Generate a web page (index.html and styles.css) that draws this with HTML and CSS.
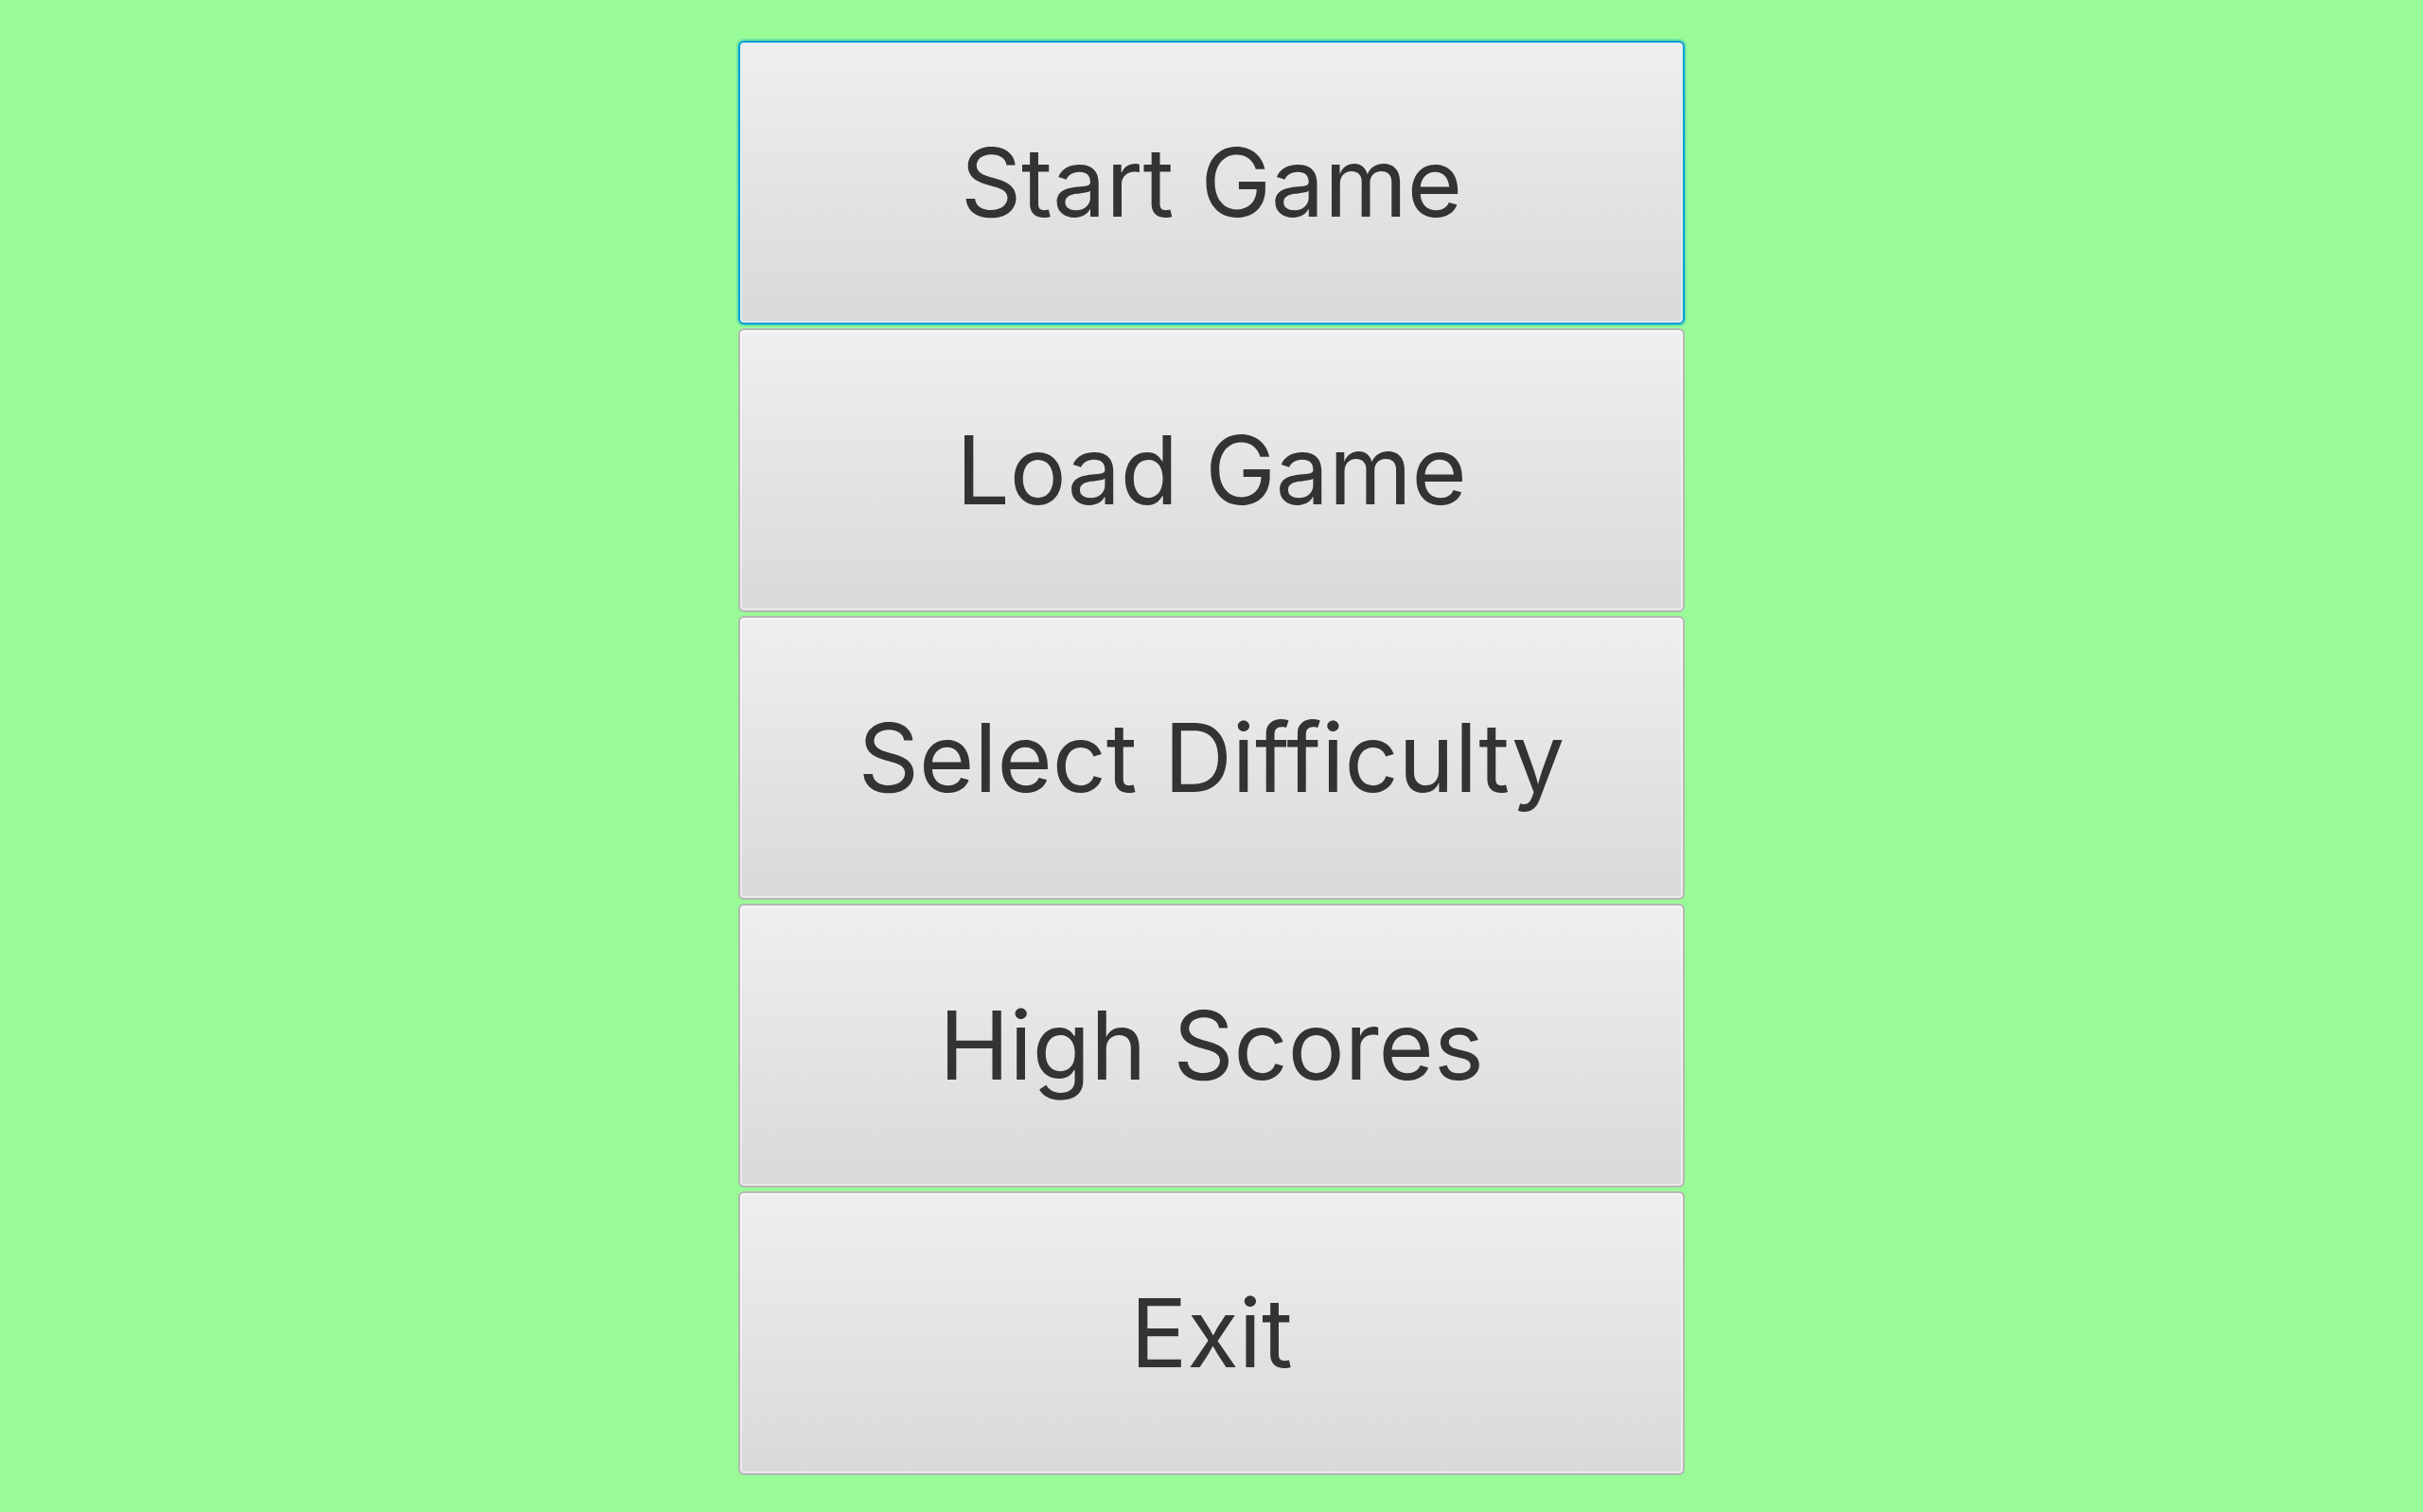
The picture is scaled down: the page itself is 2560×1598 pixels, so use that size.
FILE: index.html
```html
<!DOCTYPE html>
<html>
<head>
<meta charset="utf-8">
<link rel="stylesheet" href="styles.css">
</head>
<body>
<div class="menu">
  <button class="btn focused">Start Game</button>
  <button class="btn">Load Game</button>
  <button class="btn">Select Difficulty</button>
  <button class="btn">High Scores</button>
  <button class="btn">Exit</button>
</div>
</body>
</html>
```
FILE: styles.css
```css
html, body {
  margin: 0;
  padding: 0;
  background: #98fb98;
  height: 100%;
}
.menu {
  width: 1000px;
  margin: 0 auto;
  padding-top: 43px;
  display: flex;
  flex-direction: column;
  gap: 4px;
}
.btn {
  box-sizing: border-box;
  height: 300px;
  width: 1000px;
  margin: 0;
  padding: 0;
  border: 2px solid #b6b6b6;
  border-radius: 6px;
  background: linear-gradient(to bottom, #efefef 0%, #e4e4e4 50%, #d9d9d9 100%);
  box-shadow: inset 0 0 0 2px rgba(255,255,255,0.45);
  color: #333333;
  font-family: Inter, "Noto Sans", sans-serif;
  font-size: 100px;
  font-weight: 400;
  letter-spacing: 0;
  line-height: 1;
  text-align: center;
  outline: none;
}
.btn.focused {
  border-color: #039ed3;
  box-shadow: inset 0 0 0 2px rgba(220,238,248,0.8), 0 0 0 2px rgba(3,158,211,0.25);
}
```
